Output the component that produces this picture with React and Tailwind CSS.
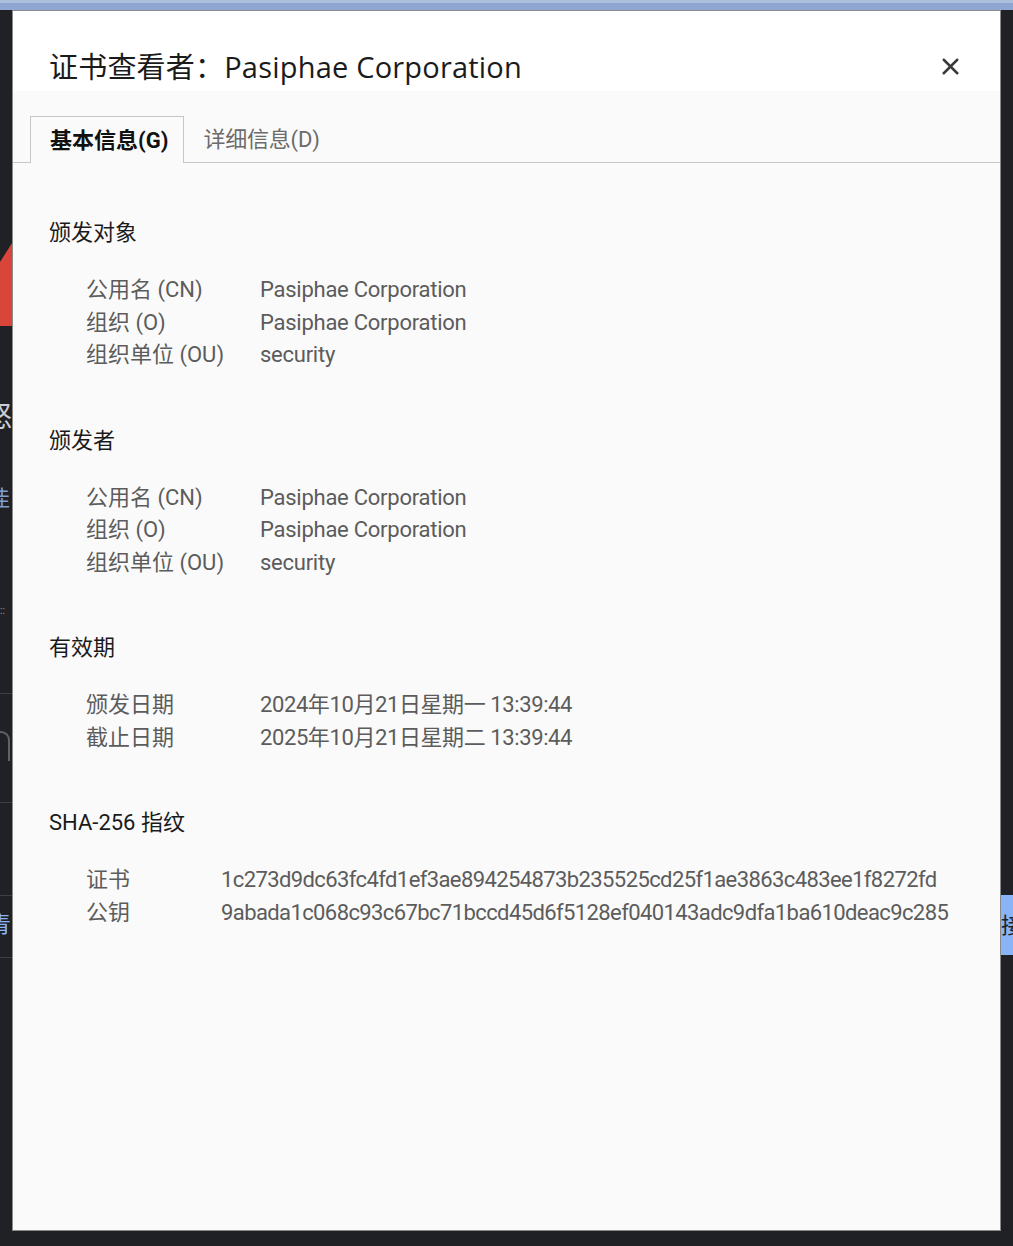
import { X } from "lucide-react"

const bodyFont = { fontFamily: 'Roboto, "Noto Sans CJK SC", sans-serif' }
const titleFont = { fontFamily: '"Open Sans", "Noto Sans CJK SC", sans-serif' }

const subject = [
	["公用名 (CN)", "Pasiphae Corporation"],
	["组织 (O)", "Pasiphae Corporation"],
	["组织单位 (OU)", "security"],
]

const validity = [
	["颁发日期", "2024年10月21日星期一 13:39:44"],
	["截止日期", "2025年10月21日星期二 13:39:44"],
]

const fingerprints = [
	["证书", "1c273d9dc63fc4fd1ef3ae894254873b235525cd25f1ae3863c483ee1f8272fd"],
	["公钥", "9abada1c068c93c67bc71bccd45d6f5128ef040143adc9dfa1ba610deac9c285"],
]

function Section({ title, rows, labelWidth = "w-[174px]", valueClass = "tracking-[-0.25px]" }) {
	return (
		<section className="flex flex-col gap-[25px]">
			<h2 className="text-[22px] leading-[32px] text-[#1a1a1a]">{title}</h2>
			<div className="pl-[37px]">
				{rows.map(([label, value]) => (
					<div key={label} className="flex text-[22px] leading-[32.5px] text-[#5c5c5c]">
						<span className={`${labelWidth} shrink-0`}>{label}</span>
						<span className={`whitespace-nowrap ${valueClass}`}>{value}</span>
					</div>
				))}
			</div>
		</section>
	)
}

// slivers of the page that shows behind the dialog
function LeftStrip() {
	return (
		<div className="flex w-[12px] shrink-0 flex-col overflow-hidden">
			<div className="h-[233px]" />
			<div className="h-[83px] bg-[#d9453b] [clip-path:polygon(100%_0,100%_100%,0_100%,0_23%)]" />
			<div className="mt-[78px] -ml-[16px] whitespace-nowrap text-[28px] leading-[28px] text-[#c9cdd4]">怒</div>
			<div className="mt-[56px] -ml-[12px] whitespace-nowrap text-[22px] leading-[22px] text-[#7f9fce]">佳</div>
			<div className="mt-[96px] text-[10px] leading-[10px] text-[#9aa0a6]">::</div>
			<div className="mt-[77px] h-px bg-[#3c4043]" />
			<div className="mt-[37px] -ml-[8px] h-[30px] w-[18px] shrink-0 rounded-t-full border-2 border-b-0 border-[#5f6368]" />
			<div className="mt-[41px] h-px bg-[#3c4043]" />
			<div className="mt-[92px] h-px bg-[#3c4043]" />
			<div className="mt-[18px] -ml-[11px] whitespace-nowrap text-[22px] leading-[22px] text-[#8ab4f8]">青</div>
			<div className="mt-[21px] h-px bg-[#3c4043]" />
		</div>
	)
}

function RightStrip() {
	return (
		<div className="flex w-[12px] shrink-0 flex-col overflow-hidden">
			<div className="h-[885px]" />
			<div className="flex h-[60px] items-center bg-[#8ab4f8] text-[22px] text-[#202124]">
				<span className="whitespace-nowrap">接受</span>
			</div>
		</div>
	)
}

export default function App() {
	return (
		<div className="flex h-[1246px] w-[1013px] flex-col overflow-hidden bg-[#202124]" style={bodyFont}>
			<div className="h-[3px] bg-[#aebfdb]" />
			<div className="h-[7px] bg-[#8fa6d3]" />

			<div className="flex">
				<LeftStrip />

				{/* certificate viewer dialog */}
				<div className="flex h-[1221px] w-[989px] flex-col border border-[#8a8a8a] bg-[#fafafa]">
					<header className="flex h-[80px] items-end justify-between bg-white pl-[36px] pr-[36px]">
						<h1 className="pb-[4px] text-[29px] leading-[40px] tracking-[0.2px] text-[#1b1b1b]" style={titleFont}>
							证书查看者：Pasiphae Corporation
						</h1>
						<button className="mb-[11px] text-[#3a3a3a]" aria-label="关闭">
							<X size={27} strokeWidth={2.2} />
						</button>
					</header>

					<div className="flex h-[72px] items-end border-b border-[#c6c6c6] pl-[17px]">
						<div className="-mb-px flex h-[47px] items-center border border-b-0 border-[#c6c6c6] bg-[#fafafa] pl-[19px] pr-[15px] text-[22px] font-bold text-[#111]">
							基本信息(G)
						</div>
						<div className="flex h-[46px] items-center pl-[19px] text-[22px] tracking-[-0.2px] text-[#6b6b6b]">
							详细信息(D)
						</div>
					</div>

					<div className="flex flex-col gap-[53px] pl-[36px] pt-[54px]">
						<Section title="颁发对象" rows={subject} />
						<Section title="颁发者" rows={subject} />
						<Section title="有效期" rows={validity} valueClass="tracking-[-0.4px]" />
						<Section
							title="SHA-256 指纹"
							rows={fingerprints}
							labelWidth="w-[135px]"
							valueClass="tracking-[-0.6px]"
						/>
					</div>
				</div>

				<RightStrip />
			</div>
		</div>
	)
}
